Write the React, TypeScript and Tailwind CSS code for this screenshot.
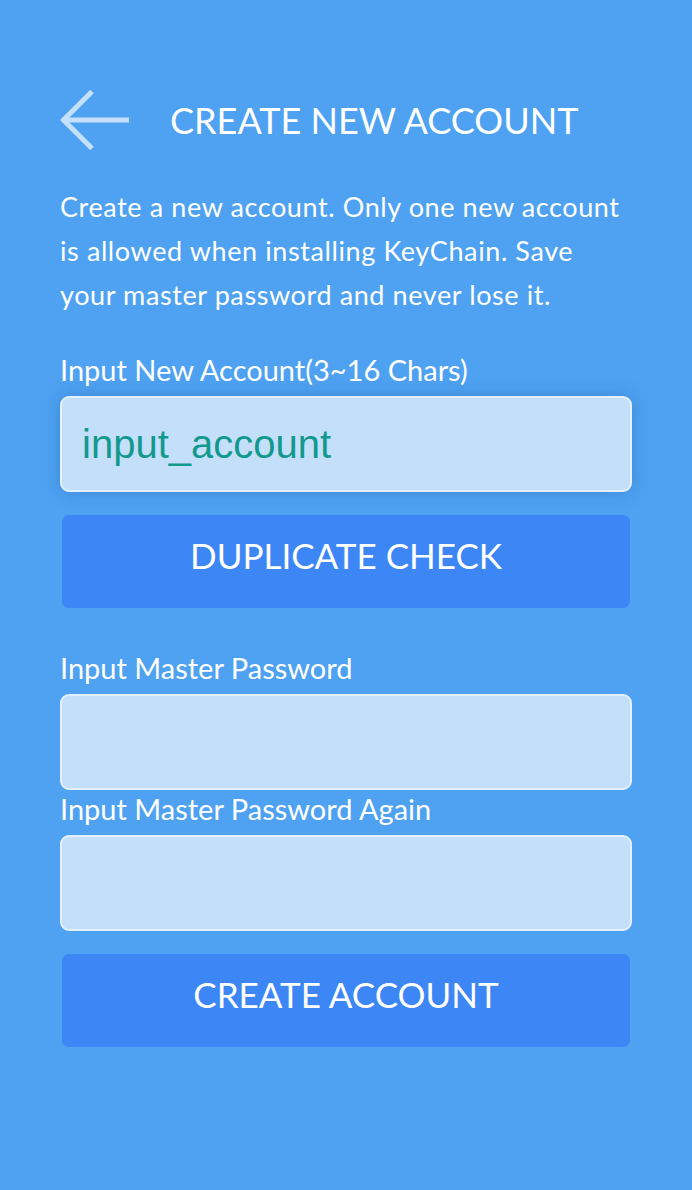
import { useState } from "react";

const font = { fontFamily: "Lato, 'Open Sans', sans-serif" };

function Field({
  label,
  value,
  onChange,
  type = "text",
  glow = false,
}: {
  label: string;
  value: string;
  onChange: (v: string) => void;
  type?: string;
  glow?: boolean;
}) {
  return (
    <div className="flex flex-col">
      <label className="text-[29px] leading-[34px] text-white" style={font}>
        {label}
      </label>
      <input
        type={type}
        value={value}
        onChange={(e) => onChange(e.target.value)}
        className={
          "mt-[9px] h-[96px] w-full rounded-[9px] border-2 border-[#e4f0fd] bg-[#c4dffa] px-[20px] text-[40px] text-[#12998d] outline-none" +
          (glow ? " shadow-[0_0_18px_rgba(30,90,170,0.35)]" : "")
        }
        style={{ fontFamily: "'Liberation Sans', Arial, sans-serif" }}
      />
    </div>
  );
}

export default function App() {
  const [account, setAccount] = useState("input_account");
  const [pw, setPw] = useState("");
  const [pw2, setPw2] = useState("");

  return (
    <div className="min-h-[1190px] w-full bg-[#4ea2f1] px-[60px] pt-[88px]" style={font}>
      {/* header */}
      <div className="flex h-[64px] items-center">
        <button className="flex h-[64px] w-[72px] items-center" aria-label="Back">
          <svg width="72" height="64" viewBox="0 0 72 64" fill="none" stroke="#c4e0fb" strokeWidth="5">
            <path d="M69 32H2" />
            <path d="M32 3.5L3.5 32 32 60.5" />
          </svg>
        </button>
        <h1 className="ml-[38px] text-[36px] font-normal text-white">CREATE NEW ACCOUNT</h1>
      </div>

      <p className="mt-[33px] text-[27px] leading-[44px] tracking-[0.6px] text-white">
        Create a new account. Only one new account is allowed when installing KeyChain. Save your master password and never lose it.
      </p>

      <div className="mt-[36px]">
        <Field label="Input New Account(3~16 Chars)" value={account} onChange={setAccount} glow />
      </div>

      <button className="mx-[2px] mt-[23px] flex h-[93px] w-[568px] items-center justify-center rounded-[7px] bg-[#3d86f5] pb-[12px] text-[35px] text-white">
        DUPLICATE CHECK
      </button>

      <div className="mt-[43px] flex flex-col gap-[2px]">
        <Field label="Input Master Password" value={pw} onChange={setPw} type="password" />
        <Field label="Input Master Password Again" value={pw2} onChange={setPw2} type="password" />
      </div>

      <button className="mx-[2px] mt-[23px] flex h-[93px] w-[568px] items-center justify-center rounded-[7px] bg-[#3d86f5] pb-[12px] text-[35px] text-white">
        CREATE ACCOUNT
      </button>
    </div>
  );
}
